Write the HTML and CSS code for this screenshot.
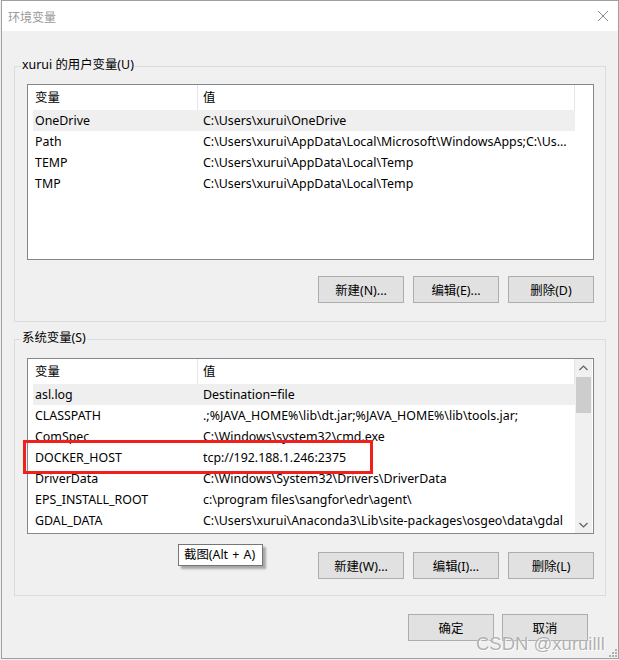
FILE: index.html
```html
<!DOCTYPE html>
<html lang="zh-CN">
<head>
<meta charset="utf-8">
<title>环境变量</title>
<link rel="stylesheet" href="styles.css">
</head>
<body>
<div class="window">
  <div class="titlebar">
    <span class="title">环境变量</span>
    <svg class="close" width="12" height="12" viewBox="0 0 12 12"><path d="M1 1L11 11M11 1L1 11" stroke="#8a8a8a" stroke-width="1" fill="none"/></svg>
  </div>
  <div class="content">
    <div class="group">
      <div class="group-title">xurui 的用户变量(U)</div>
      <div class="listbox">
        <div class="list">
          <div class="head"><span class="c1">变量</span><span class="c2">值</span></div>
          <div class="row sel"><span class="c1">OneDrive</span><span class="c2">C:\Users\xurui\OneDrive</span></div>
          <div class="row"><span class="c1">Path</span><span class="c2">C:\Users\xurui\AppData\Local\Microsoft\WindowsApps;C:\Us...</span></div>
          <div class="row"><span class="c1">TEMP</span><span class="c2">C:\Users\xurui\AppData\Local\Temp</span></div>
          <div class="row"><span class="c1">TMP</span><span class="c2">C:\Users\xurui\AppData\Local\Temp</span></div>
        </div>
        <div class="rightpad"></div>
      </div>
      <div class="btns">
        <button class="btn">新建(N)...</button>
        <button class="btn">编辑(E)...</button>
        <button class="btn">删除(D)</button>
      </div>
    </div>

    <div class="group group2">
      <div class="group-title">系统变量(S)</div>
      <div class="listbox">
        <div class="list">
          <div class="head"><span class="c1">变量</span><span class="c2">值</span></div>
          <div class="row sel"><span class="c1">asl.log</span><span class="c2">Destination=file</span></div>
          <div class="row"><span class="c1">CLASSPATH</span><span class="c2">.;%JAVA_HOME%\lib\dt.jar;%JAVA_HOME%\lib\tools.jar;</span></div>
          <div class="row"><span class="c1">ComSpec</span><span class="c2">C:\Windows\system32\cmd.exe</span></div>
          <div class="row"><span class="c1">DOCKER_HOST</span><span class="c2">tcp://192.188.1.246:2375</span></div>
          <div class="row"><span class="c1">DriverData</span><span class="c2">C:\Windows\System32\Drivers\DriverData</span></div>
          <div class="row"><span class="c1">EPS_INSTALL_ROOT</span><span class="c2">c:\program files\sangfor\edr\agent\</span></div>
          <div class="row"><span class="c1">GDAL_DATA</span><span class="c2">C:\Users\xurui\Anaconda3\Lib\site-packages\osgeo\data\gdal</span></div>
        </div>
        <div class="scrollbar">
          <div class="arrow"><svg width="9" height="6" viewBox="0 0 9 6"><path d="M0.5 5L4.5 1L8.5 5" stroke="#606060" stroke-width="1.2" fill="none"/></svg></div>
          <div class="thumb"></div>
          <div class="track"></div>
          <div class="arrow"><svg width="9" height="6" viewBox="0 0 9 6"><path d="M0.5 1L4.5 5L8.5 1" stroke="#606060" stroke-width="1.2" fill="none"/></svg></div>
        </div>
      </div>
      <div class="btns">
        <button class="btn">新建(W)...</button>
        <button class="btn">编辑(I)...</button>
        <button class="btn">删除(L)</button>
      </div>
    </div>

    <div class="footer">
      <button class="btn">确定</button>
      <button class="btn">取消</button>
    </div>
  </div>

  <div class="highlight"></div>
  <div class="tooltip">截图(Alt + A)</div>
  <div class="watermark">CSDN @xuruilll</div>
  <svg class="grip" width="9" height="9" viewBox="0 0 9 9">
    <rect x="7" y="1" width="2" height="2" fill="#b0b0b0"/>
    <rect x="4" y="4" width="2" height="2" fill="#b0b0b0"/>
    <rect x="7" y="4" width="2" height="2" fill="#b0b0b0"/>
    <rect x="1" y="7" width="2" height="2" fill="#b0b0b0"/>
    <rect x="4" y="7" width="2" height="2" fill="#b0b0b0"/>
    <rect x="7" y="7" width="2" height="2" fill="#b0b0b0"/>
  </svg>
</div>
</body>
</html>
```
FILE: styles.css
```css
* { box-sizing: border-box; }
html, body { margin: 0; padding: 0; }
body {
  background: #f0f0f0;
  font-family: "Noto Sans", "Noto Sans CJK SC", sans-serif;
  font-size: 12.4px;
  color: #000;
}
.window {
  position: relative;
  margin-left: 1px;
  width: 618px;
  height: 659px;
  border: 1px solid #a0a0a0;
  background: #f0f0f0;
  display: flex;
  flex-direction: column;
}
.titlebar {
  height: 30px;
  background: #fff;
  display: flex;
  align-items: center;
  justify-content: space-between;
  padding: 0 8px 0 6px;
}
.title {
  color: #999;
  font-family: "Noto Sans CJK SC", sans-serif;
  font-size: 12px;
}
.close { display: block; margin-right: 1px; }
.content {
  padding: 35px 12px 0 12px;
  display: flex;
  flex-direction: column;
}
.group {
  border: 1px solid #dcdcdc;
  padding: 0 11px 18px 12px;
  display: flex;
  flex-direction: column;
}
.group-title {
  align-self: flex-start;
  margin: -10px 0 11px -6px;
  padding: 0 1px;
  line-height: 16px;
  background: #f0f0f0;
  color: #000;
}
.group2 {
  margin-top: 17px;
  padding-bottom: 16px;
}
.group2 .group-title { margin-bottom: 12px; }
.group2 .btns { margin-top: 18px; }
.listbox {
  height: 176px;
  border: 1px solid #828790;
  background: #fff;
  display: flex;
  padding-left: 5px;
  overflow: hidden;
}
.list {
  width: 542px;
  flex: none;
  display: flex;
  flex-direction: column;
}
.rightpad { flex: 1; }
.head {
  height: 25px;
  display: flex;
  line-height: 25px;
  flex: none;
}
.head .c1 {
  width: 165px;
  padding-left: 2px;
  border-right: 1px solid #e5e5e5;
}
.head .c2 {
  flex: 1;
  padding-left: 5px;
  border-right: 1px solid #e5e5e5;
}
.row {
  height: 21px;
  line-height: 21px;
  display: flex;
  flex: none;
  white-space: nowrap;
}
.row.sel { background: #efefef; }
.row .c1 { width: 165px; padding-left: 2px; overflow: hidden; }
.row .c2 { flex: 1; padding-left: 5px; overflow: hidden; }
.scrollbar {
  width: 17px;
  background: #f0f0f0;
  display: flex;
  flex-direction: column;
  flex: none;
}
.arrow {
  height: 17px;
  display: flex;
  align-items: center;
  justify-content: center;
  flex: none;
}
.arrow svg { display: block; }
.thumb {
  height: 36px;
  margin: 1px 1px 0 1px;
  background: #cdcdcd;
  flex: none;
}
.track { flex: 1; }
.btns {
  margin-top: 16px;
  display: flex;
  justify-content: flex-end;
  gap: 9px;
}
.btn {
  width: 86px;
  height: 27px;
  margin: 0;
  padding: 0;
  background: #e1e1e1;
  border: 1px solid #adadad;
  font-family: "Noto Sans", "Noto Sans CJK SC", sans-serif;
  font-size: 12.4px;
  color: #000;
}
.footer {
  margin-top: 18px;
  display: flex;
  justify-content: flex-end;
  gap: 8px;
  padding-right: 18px;
}
.footer .btn { width: 86px; }
.highlight {
  position: absolute;
  left: 21px;
  top: 439px;
  width: 350px;
  height: 34px;
  border: 3px solid #f0201c;
}
.tooltip {
  position: absolute;
  left: 176px;
  top: 543px;
  width: 85px;
  height: 22px;
  background: #fff;
  border: 1px solid #767676;
  line-height: 20px;
  padding-left: 5px;
  white-space: nowrap;
  word-spacing: 1px;
  box-shadow: 3px 3px 2px rgba(0, 0, 0, 0.3);
}
.watermark {
  position: absolute;
  left: 474px;
  top: 632px;
  font-family: "Liberation Sans", sans-serif;
  font-size: 18.5px;
  color: rgba(110, 110, 110, 0.55);
  text-shadow: 0 0 1px #fff, 1px 1px 0 rgba(255,255,255,0.8);
  white-space: nowrap;
}
.grip {
  position: absolute;
  right: 1px;
  bottom: 1px;
}
```
